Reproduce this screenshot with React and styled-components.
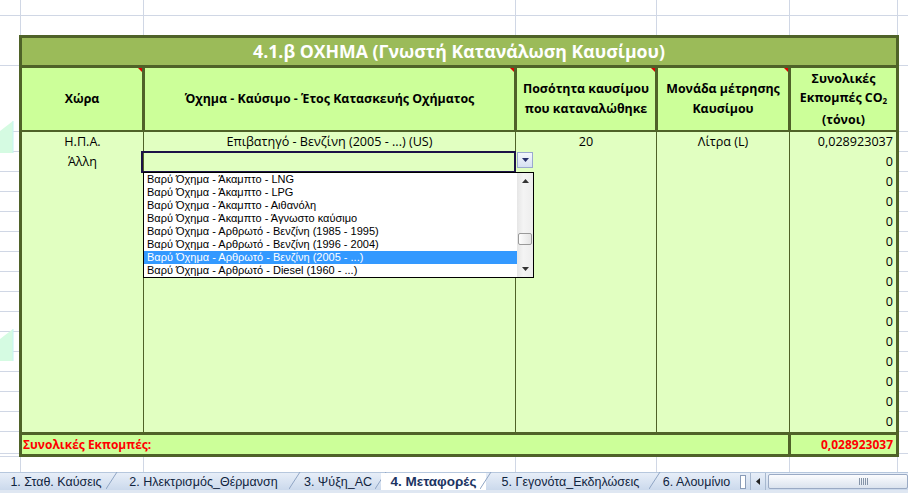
import React from "react";
import styled, { createGlobalStyle } from "styled-components";

const GRID = "#d0d7e5";
const OLIVE = "#4f6228";
const CELL_FONT = `"Open Sans", "Liberation Sans", sans-serif`;
const UI_FONT = `"Liberation Sans", "DejaVu Sans", sans-serif`;

const vLines = (xs) =>
  xs.map((x) => `linear-gradient(${GRID}, ${GRID}) ${x}px 0 / 1px 100% no-repeat`).join(", ");

const GlobalStyle = createGlobalStyle`
  html, body { margin: 0; padding: 0; background: #fff; }
  body { font-family: ${CELL_FONT}; color: #000; }
`;

const headerCols = [123, 372, 141, 133, 105];
const dataCols = [122, 372, 141, 133, 106];

const options = [
  "Βαρύ Όχημα - Άκαμπτο - LNG",
  "Βαρύ Όχημα - Άκαμπτο - LPG",
  "Βαρύ Όχημα - Άκαμπτο - Αιθανόλη",
  "Βαρύ Όχημα - Άκαμπτο - Άγνωστο καύσιμο",
  "Βαρύ Όχημα - Αρθρωτό - Βενζίνη (1985 - 1995)",
  "Βαρύ Όχημα - Αρθρωτό - Βενζίνη (1996 - 2004)",
  "Βαρύ Όχημα - Αρθρωτό - Βενζίνη (2005 - ...)",
  "Βαρύ Όχημα - Αρθρωτό - Diesel (1960 - ...)",
];

const rows = Array.from({ length: 15 }, (_, i) => {
  if (i === 0)
    return ["Η.Π.Α.", "Επιβατηγό - Βενζίνη (2005 - ...) (US)", "20", "Λίτρα (L)", "0,028923037"];
  if (i === 1) return ["Άλλη", "", "", "", "0"];
  return ["", "", "", "", "0"];
});

const gutterRows = [31, 66, ...Array(15).fill(20), 22, 3];

const tabs = [
  { label: "1. Σταθ. Καύσεις", width: 112 },
  { label: "2. Ηλεκτρισμός_Θέρμανση", width: 183 },
  { label: "3. Ψύξη_AC", width: 86 },
  { label: "4. Μεταφορές", width: 105, active: true },
  { label: "5. Γεγονότα_Εκδηλώσεις", width: 169 },
  { label: "6. Αλουμίνιο", width: 83 },
];

const Page = styled.div`
  width: 908px;
  height: 493px;
  display: flex;
  flex-direction: column;
  overflow: hidden;
  background: #fff;
`;

const TopStrip = styled.div`
  height: 35px;
  flex-shrink: 0;
  background: linear-gradient(${GRID}, ${GRID}) 0 15px / 100% 1px no-repeat,
    ${vLines([20, 143, 515, 656, 789, 897])};
`;

const Middle = styled.div`
  display: flex;
  height: 422px;
  flex-shrink: 0;
`;

const Gutter = styled.div`
  width: ${(p) => p.$w}px;
  flex-shrink: 0;
  display: flex;
  flex-direction: column;
  position: relative;
`;

const GutterRow = styled.div`
  height: ${(p) => p.$h}px;
  box-sizing: border-box;
  border-bottom: 1px solid ${GRID};
  &:last-child {
    border-bottom: none;
  }
`;

const Shape = styled.svg`
  position: absolute;
  left: 0;
  top: ${(p) => p.$top}px;
`;

const BottomStrip = styled.div`
  height: 15px;
  flex-shrink: 0;
  background: ${vLines([20, 143, 515, 656, 789, 897])};
`;

const Frame = styled.div`
  width: 880px;
  height: 422px;
  box-sizing: border-box;
  border: 3px solid ${OLIVE};
  display: flex;
  flex-direction: column;
  background: #e1ffc1;
`;

const Title = styled.div`
  height: 30px;
  box-sizing: border-box;
  border-bottom: 3px solid ${OLIVE};
  background: #9bbb59;
  color: #fff;
  font-weight: 700;
  font-size: 17.7px;
  line-height: 27px;
  text-align: center;
`;

const HeaderRow = styled.div`
  height: 64px;
  box-sizing: border-box;
  border-bottom: 2px solid ${OLIVE};
  background: #ccff99;
  display: flex;
`;

const HeaderCell = styled.div`
  position: relative;
  width: ${(p) => p.$w}px;
  box-sizing: border-box;
  border-right: 3px solid ${OLIVE};
  display: flex;
  align-items: center;
  justify-content: center;
  &:last-child {
    border-right: none;
  }
`;

const HeaderText = styled.div`
  text-align: center;
  font-weight: 700;
  font-size: 12.4px;
  line-height: ${(p) => p.$lh || 20}px;
  white-space: nowrap;
`;

const Flag = styled.span`
  position: absolute;
  top: 0;
  right: 0;
  width: 0;
  height: 0;
  border-top: 4px solid #e00000;
  border-left: 4px solid transparent;
`;

const Sub = styled.span`
  font-size: 8px;
  vertical-align: -2px;
`;

const DataArea = styled.div`
  position: relative;
  height: 300px;
  display: flex;
  flex-direction: column;
`;

const DataRow = styled.div`
  height: 20px;
  display: flex;
`;

const DataCell = styled.div`
  width: ${(p) => p.$w}px;
  box-sizing: border-box;
  border-right: 1px solid ${OLIVE};
  font-size: 12.6px;
  line-height: 20px;
  text-align: ${(p) => p.$align};
  padding: 0 3px;
  white-space: nowrap;
  &:last-child {
    border-right: none;
  }
`;

const TotalRow = styled.div`
  height: 22px;
  box-sizing: border-box;
  border-top: 3px solid ${OLIVE};
  background: #ccff99;
  display: flex;
  color: #ff0000;
  font-weight: 700;
  font-size: 12px;
  line-height: 19px;
`;

const TotalLabel = styled.div`
  width: 769px;
  box-sizing: border-box;
  border-right: 3px solid ${OLIVE};
  padding-left: 1px;
`;

const TotalValue = styled.div`
  flex: 1;
  text-align: right;
  padding-right: 3px;
`;

const Editor = styled.div`
  position: absolute;
  left: 119px;
  top: 19px;
  width: 375px;
  height: 22px;
  box-sizing: border-box;
  border: 2px solid #1c1247;
`;

const DropButton = styled.div`
  position: absolute;
  left: 495px;
  top: 20px;
  width: 16px;
  height: 16px;
  box-sizing: border-box;
  border: 1px solid #9aa9cf;
  background: linear-gradient(#f4f7fd, #d6e0f2);
  display: flex;
  align-items: center;
  justify-content: center;
`;

const ListBox = styled.div`
  position: absolute;
  left: 121px;
  top: 40px;
  width: 391px;
  height: 106px;
  box-sizing: border-box;
  border: 1px solid #000;
  background: #fff;
  display: flex;
`;

const Items = styled.div`
  flex: 1;
  display: flex;
  flex-direction: column;
`;

const Item = styled.div`
  height: 13px;
  line-height: 13px;
  padding-left: 3px;
  font-family: ${UI_FONT};
  font-size: 11px;
  white-space: nowrap;
  color: ${(p) => (p.$selected ? "#fff" : "#000")};
  background: ${(p) => (p.$selected ? "#3399ff" : "transparent")};
`;

const VScroll = styled.div`
  width: 16px;
  display: flex;
  flex-direction: column;
  background: linear-gradient(90deg, #e6e6e6, #f4f4f4 40%, #ededed);
`;

const ScrollArrow = styled.div`
  height: 16px;
  display: flex;
  align-items: center;
  justify-content: center;
`;

const Track = styled.div`
  flex: 1;
  position: relative;
`;

const Thumb = styled.div`
  position: absolute;
  left: 1px;
  width: 14px;
  height: 12px;
  box-sizing: border-box;
  border: 1px solid #9a9a9a;
  border-radius: 2px;
  background: linear-gradient(90deg, #fdfdfd, #e4e4e4);
`;

const TabBar = styled.div`
  height: 21px;
  flex-shrink: 0;
  display: flex;
  box-sizing: border-box;
  border-bottom: 3px solid #dfe7f2;
  background: linear-gradient(#e7eef8, #cbd9ec);
  border-top: 1px solid #b6c7dd;
`;

const Tab = styled.div`
  width: ${(p) => p.$w}px;
  flex-shrink: 0;
  display: flex;
  align-items: center;
  justify-content: center;
  position: relative;
  font-family: ${UI_FONT};
  font-size: ${(p) => (p.$active ? 13.5 : 12.5)}px;
  font-weight: ${(p) => (p.$active ? 700 : 400)};
  color: ${(p) => (p.$active ? "#1c3462" : "#10243e")};
  background: ${(p) => (p.$active ? "#fff" : "transparent")};
  box-sizing: border-box;
  white-space: nowrap;
`;

const Slant = styled.svg`
  position: absolute;
  right: -6px;
  top: -1px;
`;

const Splitter = styled.div`
  width: 4px;
  height: 12px;
  margin: 2px 4px 0 2px;
  border: 1px solid #8a9cb8;
  background: #fff;
`;

const HArrow = styled.div`
  width: 14px;
  display: flex;
  align-items: center;
  justify-content: center;
  border-left: 1px solid #a7b8cf;
  border-right: 1px solid #a7b8cf;
`;

const HThumb = styled.div`
  flex: 1;
  margin: 1px 0 1px 2px;
  border: 1px solid #9aaac4;
  border-radius: 2px;
  background: linear-gradient(#fbfcfe, #dbe3ee);
  display: flex;
  align-items: center;
  padding-left: 90px;
`;

const Grip = styled.div`
  width: 9px;
  height: 7px;
  background: repeating-linear-gradient(90deg, #8594a8 0 1px, transparent 1px 2px);
`;

const Tri = ({ dir = "down", color = "#1c2a5a" }) => {
  const pts = {
    down: "0,0 7,0 3.5,4",
    up: "0,4 7,4 3.5,0",
    left: "4,0 4,7 0,3.5",
  }[dir];
  const w = dir === "left" ? 4 : 7;
  const h = dir === "left" ? 7 : 4;
  return (
    <svg width={w} height={h} viewBox={`0 0 ${w} ${h}`}>
      <polygon points={pts} fill={color} />
    </svg>
  );
};

const MintShape = ({ top }) => (
  <Shape $top={top} width="14" height="32" viewBox="0 0 14 32">
    <polygon points="0,10 13,0 13,32 0,32" fill="#d5fbe2" />
    <line x1="13" y1="0" x2="13" y2="32" stroke="#c4f4f4" strokeWidth="1" />
  </Shape>
);

export default function App() {
  return (
    <>
      <GlobalStyle />
      <Page>
        <TopStrip />
        <Middle>
          <Gutter $w={19}>
            {gutterRows.map((h, i) => (
              <GutterRow key={i} $h={h} />
            ))}
            <MintShape top={86} />
            <MintShape top={294} />
          </Gutter>
          <Frame>
            <Title>4.1.β ΟΧΗΜΑ (Γνωστή Κατανάλωση Καυσίμου)</Title>
            <HeaderRow>
              <HeaderCell $w={headerCols[0]}>
                <HeaderText>Χώρα</HeaderText>
                <Flag />
              </HeaderCell>
              <HeaderCell $w={headerCols[1]}>
                <HeaderText>Όχημα - Καύσιμο - Έτος Κατασκευής Οχήματος</HeaderText>
                <Flag />
              </HeaderCell>
              <HeaderCell $w={headerCols[2]}>
                <HeaderText>
                  Ποσότητα καυσίμου
                  <br />
                  που καταναλώθηκε
                </HeaderText>
                <Flag />
              </HeaderCell>
              <HeaderCell $w={headerCols[3]}>
                <HeaderText>
                  Μονάδα μέτρησης
                  <br />
                  Καυσίμου
                </HeaderText>
                <Flag />
              </HeaderCell>
              <HeaderCell $w={headerCols[4]}>
                <HeaderText $lh={19}>
                  Συνολικές
                  <br />
                  Εκπομπές CO<Sub>2</Sub>
                  <br />
                  (τόνοι)
                </HeaderText>
              </HeaderCell>
            </HeaderRow>
            <DataArea>
              {rows.map((r, i) => (
                <DataRow key={i}>
                  {r.map((v, j) => (
                    <DataCell key={j} $w={dataCols[j]} $align={j === 4 ? "right" : "center"}>
                      {v}
                    </DataCell>
                  ))}
                </DataRow>
              ))}
              <Editor />
              <DropButton>
                <Tri dir="down" color="#27306b" />
              </DropButton>
              <ListBox>
                <Items>
                  {options.map((o, i) => (
                    <Item key={o} $selected={i === 6}>
                      {o}
                    </Item>
                  ))}
                </Items>
                <VScroll>
                  <ScrollArrow>
                    <Tri dir="up" color="#333" />
                  </ScrollArrow>
                  <Track>
                    <Thumb style={{ top: 44 }} />
                  </Track>
                  <ScrollArrow>
                    <Tri dir="down" color="#333" />
                  </ScrollArrow>
                </VScroll>
              </ListBox>
            </DataArea>
            <TotalRow>
              <TotalLabel>Συνολικές Εκπομπές:</TotalLabel>
              <TotalValue>0,028923037</TotalValue>
            </TotalRow>
          </Frame>
          <Gutter $w={9}>
            {gutterRows.map((h, i) => (
              <GutterRow key={i} $h={h} />
            ))}
          </Gutter>
        </Middle>
        <BottomStrip />
        <TabBar>
          {tabs.map((t, i) => (
            <Tab key={t.label} $w={t.width} $active={t.active}>
              {t.label}
              {i < tabs.length - 1 && (
                <Slant width="12" height="18" viewBox="0 0 12 18">
                  <line x1="0" y1="17" x2="11" y2="0" stroke="#8fa5c4" strokeWidth="1" />
                </Slant>
              )}
            </Tab>
          ))}
          <Splitter />
          <HArrow>
            <Tri dir="left" color="#222" />
          </HArrow>
          <HThumb>
            <Grip />
          </HThumb>
        </TabBar>
      </Page>
    </>
  );
}
